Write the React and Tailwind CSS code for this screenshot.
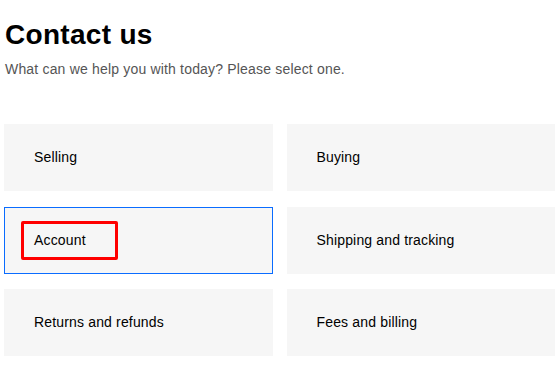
export default function App() {
  const items = [
    { label: "Selling" },
    { label: "Buying" },
    { label: "Account", active: true },
    { label: "Shipping and tracking" },
    { label: "Returns and refunds" },
    { label: "Fees and billing" },
  ];
  return (
    <div className="w-[557px] h-[370px] bg-white text-black" style={{ fontFamily: '"Liberation Sans", Arial, sans-serif' }}>
      <div className="pl-[5px] pt-[19px]">
        <h1 className="text-[28px] leading-[32px] font-bold tracking-[0.3px]">Contact us</h1>
        <p className="mt-[8px] text-[14px] leading-[20px] text-[#555555] tracking-[0.18px]">What can we help you with today? Please select one.</p>
      </div>
      <div className="mt-[45px] pl-[4px] pr-[2px] grid grid-cols-2 gap-x-[14px] gap-y-[15.5px]">
        {items.map((it) => (
          <div
            key={it.label}
            className={
              "h-[67px] bg-[#f6f6f6] flex items-center text-[14px] tracking-[0.16px] " +
              (it.active ? "border border-[#0a6cff] pl-[29px]" : "pl-[30px]")
            }
          >
            {it.active ? (
              <span className="relative">
                {it.label}
                <span className="absolute left-[-13px] right-[-32px] top-[-9px] bottom-[-9px] border-[3px] border-[#ff0000] rounded-[2px]"></span>
              </span>
            ) : (
              <span>{it.label}</span>
            )}
          </div>
        ))}
      </div>
    </div>
  );
}
